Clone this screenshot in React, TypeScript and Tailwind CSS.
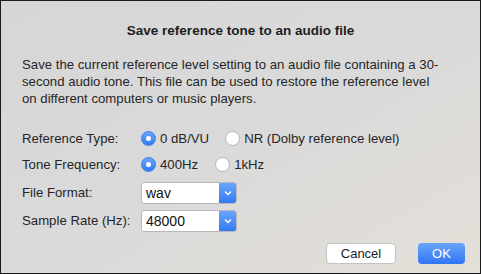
import React from "react";

const font = { fontFamily: '"Liberation Sans", Arial, sans-serif' };

function Radio({ checked, label }: { checked: boolean; label: string }) {
  return (
    <div className="flex items-center">
      {checked ? (
        <div className="w-[15px] h-[15px] rounded-full bg-gradient-to-b from-[#6aa5fa] to-[#2f7bf5] border border-[#3d7fe6] flex items-center justify-center">
          <div className="w-[5px] h-[5px] rounded-full bg-white" />
        </div>
      ) : (
        <div className="w-[15px] h-[15px] rounded-full bg-white border border-[#b5b5b5]" />
      )}
      <span className="ml-[4px]">{label}</span>
    </div>
  );
}

function Select({ value }: { value: string }) {
  return (
    <div className="flex w-[96px] h-[22px] border border-[#b8b8b8] rounded-[3px] bg-white overflow-hidden">
      <div className="flex-1 flex items-center pl-[4px] text-[14px] text-[#111]">{value}</div>
      <div className="w-[17px] bg-gradient-to-b from-[#6aa5fa] to-[#3479f5] flex items-center justify-center">
        <svg width="8" height="6" viewBox="0 0 8 6">
          <path d="M1 1.5 L4 4.5 L7 1.5" fill="none" stroke="white" strokeWidth="1.4" />
        </svg>
      </div>
    </div>
  );
}

export default function App() {
  return (
    <div
      className="w-[481px] h-[274px] border border-[#1a1a1a] bg-gradient-to-br from-[#d6d6d6] via-[#dadada] to-[#e4dfd8] text-[13.2px] text-[#262626] flex flex-col"
      style={font}
    >
      <div className="mt-[21px] text-center font-bold text-[13.5px] text-[#1e1e1e] leading-[17px]">
        Save reference tone to an audio file
      </div>
      <div className="mt-[17px] pl-[21px] pr-[6px] text-[13.2px] leading-[17px] whitespace-nowrap">
        Save the current reference level setting to an audio file containing a 30-
        <br />
        second audio tone. This file can be used to restore the reference level
        <br />
        on different computers or music players.
      </div>
      <div className="mt-[22px] pl-[21px] flex flex-col">
        <div className="flex items-center h-[20px]">
          <div className="w-[119px]">Reference Type:</div>
          <Radio checked label="0 dB/VU" />
          <div className="ml-[16px]">
            <Radio checked={false} label="NR (Dolby reference level)" />
          </div>
        </div>
        <div className="flex items-center h-[20px] mt-[6px]">
          <div className="w-[119px]">Tone Frequency:</div>
          <Radio checked label="400Hz" />
          <div className="ml-[17px]">
            <Radio checked={false} label="1kHz" />
          </div>
        </div>
        <div className="flex items-center mt-[7px]">
          <div className="w-[119px]">File Format:</div>
          <Select value="wav" />
        </div>
        <div className="flex items-center mt-[6px]">
          <div className="w-[119px]">Sample Rate (Hz):</div>
          <Select value="48000" />
        </div>
      </div>
      <div className="flex justify-end mt-[11px] pr-[15px] gap-[22px]">
        <div className="w-[70px] h-[21px] bg-white border border-[#c2c2c2] rounded-[4px] flex items-center justify-center text-[13px] text-[#1a1a1a]">
          Cancel
        </div>
        <div className="w-[47px] h-[21px] bg-gradient-to-b from-[#6aa5fa] to-[#2f76f3] rounded-[4px] flex items-center justify-center text-[13px] text-white">
          OK
        </div>
      </div>
    </div>
  );
}
